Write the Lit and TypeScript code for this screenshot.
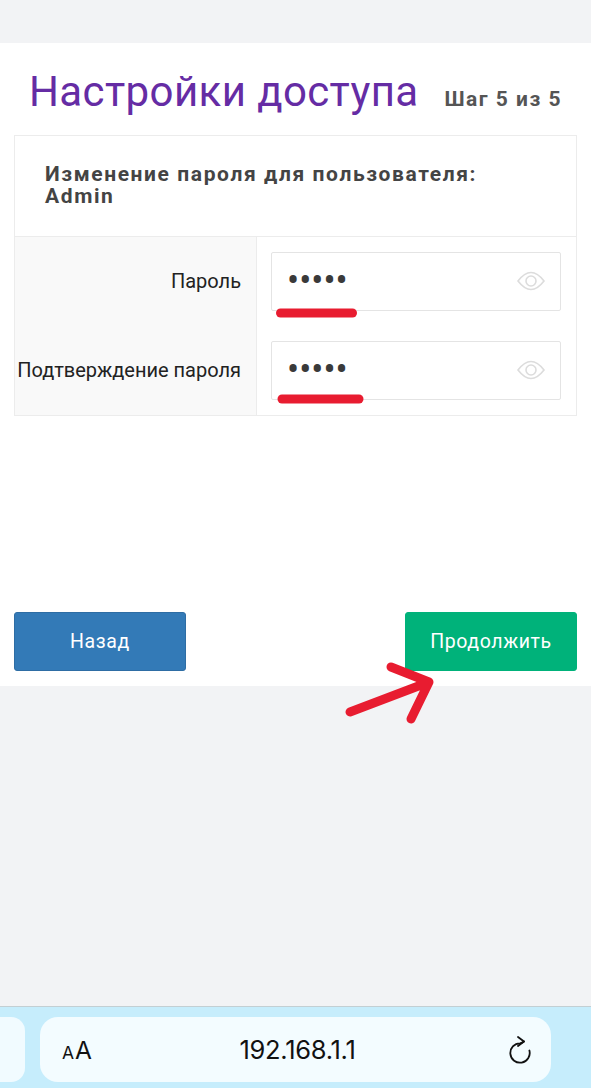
import { LitElement, html, css } from 'lit'
import { customElement } from 'lit/decorators.js'

const eye = html`<svg class="eye" viewBox="0 0 28 20" width="28" height="20" fill="none" stroke="#dcdcdc" stroke-width="1.6">
  <path d="M1 10 C6 3.5 10 1.5 14 1.5 C18 1.5 22 3.5 27 10 C22 16.5 18 18.5 14 18.5 C10 18.5 6 16.5 1 10 Z" />
  <circle cx="14" cy="10" r="5" />
</svg>`

@customElement('app-root')
export class AppRoot extends LitElement {
  static styles = css`
    :host {
      display: block;
      width: 591px;
      height: 1088px;
      overflow: hidden;
      font-family: Roboto, 'Liberation Sans', sans-serif;
    }
    .page {
      position: relative;
      display: flex;
      flex-direction: column;
      height: 1088px;
      background: #f2f3f5;
      padding-top: 43px;
      box-sizing: border-box;
    }
    .card {
      background: #fff;
      height: 643px;
      padding: 0 14px;
      box-sizing: border-box;
      display: flex;
      flex-direction: column;
    }
    .title-row {
      display: flex;
      justify-content: space-between;
      align-items: baseline;
      height: 92px;
      box-sizing: border-box;
      padding: 24px 15px 0;
    }
    h1 {
      margin: 0;
      font-size: 42px;
      font-weight: 400;
      color: #652ca4;
      letter-spacing: 0.4px;
    }
    .step {
      font-size: 21px;
      font-weight: 700;
      color: #555;
      letter-spacing: 1.5px;
    }
    .table {
      border: 1px solid #ececec;
      display: grid;
      grid-template-columns: 242px 1fr;
    }
    .head {
      grid-column: 1 / 3;
      height: 101px;
      box-sizing: border-box;
      border-bottom: 1px solid #ececec;
      padding: 27px 30px 0;
      font-size: 21px;
      line-height: 22px;
      font-weight: 700;
      color: #444;
      letter-spacing: 1.6px;
    }
    .labels {
      background: #f9f9f9;
      border-right: 1px solid #ececec;
      display: flex;
      flex-direction: column;
      padding-top: 14px;
      gap: 30px;
    }
    .label {
      height: 59px;
      display: flex;
      align-items: center;
      justify-content: flex-end;
      padding-right: 15px;
      font-size: 20px;
      color: #222;
    }
    .fields {
      display: flex;
      flex-direction: column;
      padding: 15px 15px 15px 14px;
      gap: 30px;
    }
    .input {
      height: 59px;
      box-sizing: border-box;
      border: 1px solid #e4e4e4;
      border-radius: 2px;
      background: #fff;
      display: flex;
      align-items: center;
      justify-content: space-between;
      padding: 0 15px 2px 15px;
    }
    .dots {
      font-size: 36px;
      line-height: 36px;
      color: #3a3a3a;
    }
    .actions {
      margin-top: auto;
      padding-bottom: 15px;
      display: flex;
      justify-content: space-between;
    }
    .btn {
      width: 172px;
      height: 59px;
      box-sizing: border-box;
      border-radius: 3px;
      display: flex;
      align-items: center;
      justify-content: center;
      color: #fff;
      font-size: 19.5px;
      letter-spacing: 0.6px;
    }
    .back {
      background: #337ab7;
      border: 1px solid #2e6da4;
    }
    .next {
      background: #00b27a;
      border: 1px solid #00b27a;
    }
    .spacer {
      flex: 1;
    }
    .bar {
      height: 82px;
      box-sizing: border-box;
      background: #c6edfc;
      border-top: 1px solid #c3cfd3;
      padding: 10px 40px 6px 0;
      display: flex;
      gap: 15px;
    }
    .tab-left {
      width: 25px;
      background: #f1fbff;
      border-radius: 0 14px 14px 0;
    }
    .url {
      flex: 1;
      background: #f3fcff;
      border-radius: 18px;
      display: flex;
      align-items: center;
      justify-content: space-between;
      padding: 0 18px 0 22px;
      color: #111;
      font-family: Inter, Roboto, sans-serif;
    }
    .aa {
      width: 60px;
      font-size: 24.5px;
      white-space: nowrap;
    }
    .aa small {
      font-size: 17.5px;
      margin-right: 1px;
    }
    .addr {
      font-size: 25.5px;
      letter-spacing: -0.3px;
    }
    .reload {
      width: 60px;
      display: flex;
      justify-content: flex-end;
    }
    .marks {
      position: absolute;
      left: 0;
      top: 0;
      pointer-events: none;
    }
  `

  render() {
    return html`
      <div class="page">
        <div class="card">
          <div class="title-row">
            <h1>Настройки доступа</h1>
            <span class="step">Шаг 5 из 5</span>
          </div>
          <div class="table">
            <div class="head">Изменение пароля для пользователя:<br />Admin</div>
            <div class="labels">
              <div class="label">Пароль</div>
              <div class="label">Подтверждение пароля</div>
            </div>
            <div class="fields">
              <div class="input"><span class="dots">•••••</span>${eye}</div>
              <div class="input"><span class="dots">•••••</span>${eye}</div>
            </div>
          </div>
          <div class="actions">
            <div class="btn back">Назад</div>
            <div class="btn next">Продолжить</div>
          </div>
        </div>
        <div class="spacer"></div>
        <div class="bar">
          <div class="tab-left"></div>
          <div class="url">
            <span class="aa"><small>A</small>A</span>
            <span class="addr">192.168.1.1</span>
            <span class="reload">
              <svg viewBox="0 0 24 28" width="24" height="28" fill="none" stroke="#111" stroke-width="1.8" stroke-linecap="round" stroke-linejoin="round">
                <path d="M15 5.5 Q13 6.8 11 7.3 A9.7 9.7 0 1 0 20.4 14.5" />
                <path d="M9 1 L15 5.5 L9 10" />
              </svg>
            </span>
          </div>
        </div>
        <!-- hand drawn red marks over the screenshot -->
        <svg class="marks" width="591" height="1088" fill="none" stroke="#e81c30" stroke-linecap="round" stroke-linejoin="round">
          <path d="M280.5 313 H352.5" stroke-width="9" />
          <path d="M282 399 H359" stroke-width="9" />
          <path d="M350 712 L429 682 M391 667 L429 682 L411 719" stroke-width="9" />
        </svg>
      </div>
    `
  }
}
